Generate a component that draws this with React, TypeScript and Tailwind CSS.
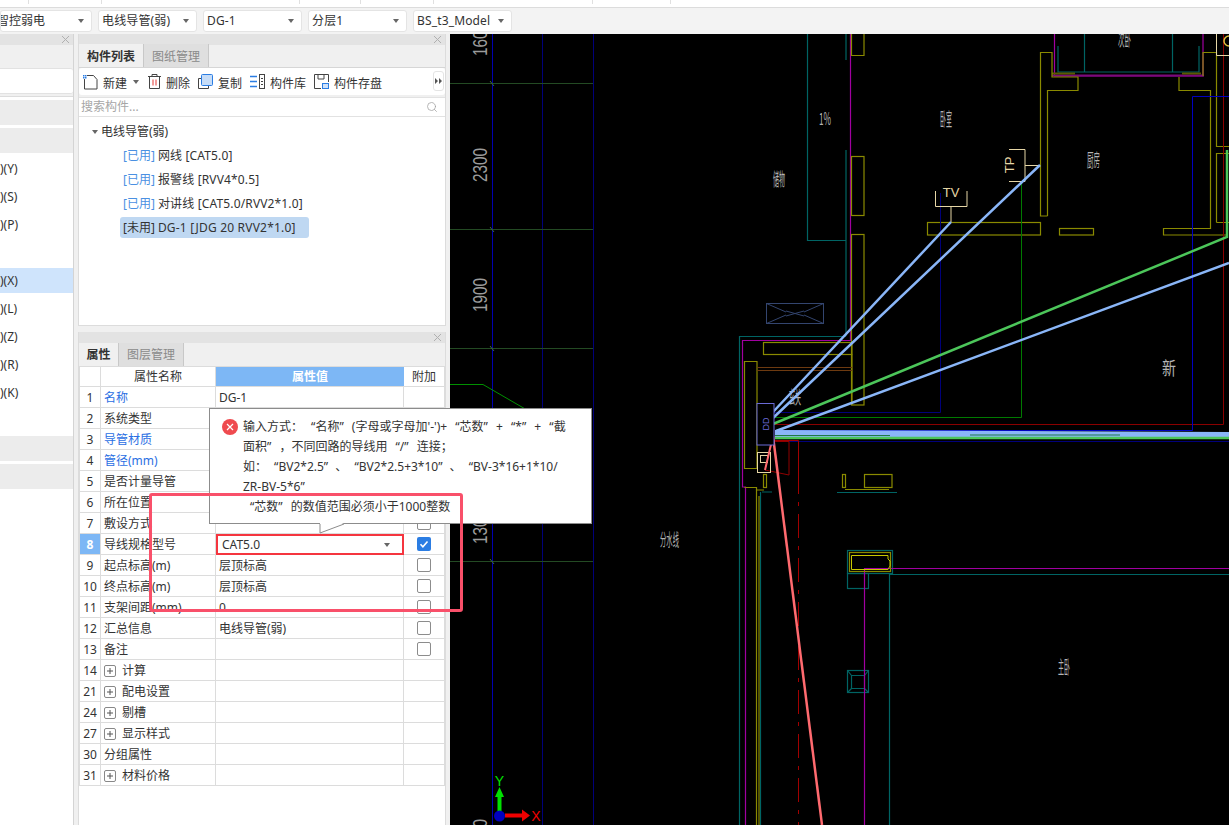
import { Search } from "lucide-react";

const SELECTS = [
  { label: "智控弱电", width: "w-[92px]", cut: true },
  { label: "电线导管(弱)", width: "w-[99px]" },
  { label: "DG-1", width: "w-[99px]" },
  { label: "分层1", width: "w-[99px]" },
  { label: "BS_t3_Model", width: "w-[99px]" },
];

const LEFT_ROWS = [
  { text: "", band: true },
  { text: "", band: true },
  { text: ")(Y)" },
  { text: ")(S)" },
  { text: ")(P)" },
  { text: "" },
  { text: ")(X)", active: true },
  { text: ")(L)" },
  { text: ")(Z)" },
  { text: ")(R)" },
  { text: ")(K)" },
  { text: "" },
  { text: "", band: true },
  { text: "", band: true },
];

const TREE = [
  { tag: "[已用]", text: "网线 [CAT5.0]" },
  { tag: "[已用]", text: "报警线 [RVV4*0.5]" },
  { tag: "[已用]", text: "对讲线 [CAT5.0/RVV2*1.0]" },
];

type Row = {
  no: number;
  name: string;
  value?: string;
  blue?: boolean;
  check?: boolean;
  plus?: boolean;
};

const ROWS: Row[] = [
  { no: 1, name: "名称", value: "DG-1", blue: true },
  { no: 2, name: "系统类型", check: true },
  { no: 3, name: "导管材质", blue: true },
  { no: 4, name: "管径(mm)", blue: true },
  { no: 5, name: "是否计量导管", check: true },
  { no: 6, name: "所在位置", check: true },
  { no: 7, name: "敷设方式", check: true },
  { no: 8, name: "导线规格型号", check: true },
  { no: 9, name: "起点标高(m)", value: "层顶标高", check: true },
  { no: 10, name: "终点标高(m)", value: "层顶标高", check: true },
  { no: 11, name: "支架间距(mm)", value: "0", check: true },
  { no: 12, name: "汇总信息", value: "电线导管(弱)", check: true },
  { no: 13, name: "备注", check: true },
  { no: 14, name: "计算", plus: true },
  { no: 21, name: "配电设置", plus: true },
  { no: 24, name: "剔槽", plus: true },
  { no: 27, name: "显示样式", plus: true },
  { no: 30, name: "分组属性" },
  { no: 31, name: "材料价格", plus: true },
];

const Caret = () => (
  <span className="w-0 h-0 border-x-[3px] border-x-transparent border-t-[4px] border-t-[#666]"></span>
);

const CloseMark = () => (
  <svg width="9" height="9" viewBox="0 0 9 9" className="text-[#b0b0b0]">
    <path d="M1 1l7 7M8 1l-7 7" stroke="currentColor" strokeWidth="1" />
  </svg>
);

const PanelHead = () => (
  <div className="h-[11px] bg-[#e3e3e3] flex items-center justify-end pr-[3px]">
    <CloseMark />
  </div>
);

const ToolText = ({ children }: { children: string }) => (
  <span className="text-[12px] text-[#333] leading-none">{children}</span>
);

const PropertyRow = ({ row }: { row: Row }) => {
  const selected = row.no === 8;
  return (
    <div className="flex h-[21px] border-b border-[#dcdcdc] text-[12px] text-[#333] leading-[22px]">
      <div
        className={`w-[22px] shrink-0 text-center border-x border-[#dcdcdc] ${
          selected ? "bg-[#7db7f5] text-white font-bold" : ""
        }`}
      >
        {row.no}
      </div>
      <div
        className={`w-[115px] shrink-0 pl-[3px] pt-[1px] border-r border-[#dcdcdc] flex items-center whitespace-nowrap ${
          row.blue ? "text-[#2b6fe3]" : ""
        }`}
      >
        {row.plus && (
          <span className="w-[12px] h-[12px] mr-[6px] border border-[#888] rounded-[2px] flex items-center justify-center">
            <svg width="6" height="6" viewBox="0 0 6 6">
              <path d="M3 0v6M0 3h6" stroke="#555" strokeWidth="1" />
            </svg>
          </span>
        )}
        {row.name}
      </div>
      {selected ? (
        <div className="w-[188px] shrink-0 border-2 border-[#f5353f] pl-[4px] flex items-center justify-between pr-[12px] h-[21px]">
          <span>CAT5.0</span>
          <Caret />
        </div>
      ) : (
        <div className="w-[188px] shrink-0 pl-[3px] border-r border-[#dcdcdc]">{row.value}</div>
      )}
      <div className="w-[41px] shrink-0 border-r border-[#dcdcdc] flex items-center justify-center">
        {row.check &&
          (selected ? (
            <span className="w-[14px] h-[14px] rounded-[2px] bg-[#2b7de3] flex items-center justify-center">
              <svg width="10" height="10" viewBox="0 0 10 10">
                <path d="M1.5 5.2l2.4 2.5 4.6-5.2" stroke="#fff" strokeWidth="1.6" fill="none" />
              </svg>
            </span>
          ) : (
            <span className="w-[14px] h-[14px] rounded-[2px] border border-[#8c8c8c] bg-white"></span>
          ))}
      </div>
    </div>
  );
};

const CadLabel = ({ x, y, text, w, h = 18 }: { x: number; y: number; text: string; w: number; h?: number }) => (
  <text
    x={x}
    y={y}
    fontSize={h}
    fill="#b4b4b4"
    textLength={w}
    lengthAdjust="spacingAndGlyphs"
    fontFamily="'Noto Sans CJK SC', sans-serif"
  >
    {text}
  </text>
);

const RulerLabel = ({ cx, cy, text, len }: { cx: number; cy: number; text: string; len: number }) => (
  <text
    transform={`translate(${cx} ${cy}) rotate(-90)`}
    textAnchor="middle"
    fontSize="20"
    fill="#9c9c9c"
    textLength={len}
    lengthAdjust="spacingAndGlyphs"
    fontFamily="'Liberation Sans', sans-serif"
  >
    {text}
  </text>
);

// CAD drawing, coordinates are page pixels
const Drawing = () => (
  <svg viewBox="450 34 779 791" className="block w-[779px] h-[791px]" fill="none">
    {/* ruler side */}
    <g strokeWidth="1">
      <path d="M492.5 34V825" stroke="#0000b0" />
      <path d="M542.5 34V825M593.5 34V825" stroke="#00007a" />
      <path d="M450 83.5H593M450 229.5H593M450 348.5H593M450 561.5H593" stroke="#234a23" />
      <path d="M450 384.5H483L527 410" stroke="#009000" />
      <path d="M490 81L494 86M490 227L494 232M490 346L494 351M490 559L494 564" stroke="#3f6a3f" />
    </g>
    <RulerLabel cx={487} cy={39} text="1600" len={34} />
    <RulerLabel cx={487} cy={165} text="2300" len={34} />
    <RulerLabel cx={487} cy={295} text="1900" len={34} />
    <RulerLabel cx={487} cy={527} text="1300" len={34} />
    <RulerLabel cx={487} cy={836} text="0000" len={34} />
    <CadLabel x={660} y={546} text="分水线" w={19} h={17} />

    {/* teal */}
    <g stroke="#006464" strokeWidth="1.2">
      <path d="M807.5 34V240.5H846M846 34V60M846 150V336M739.5 336.5H846M739.5 336V825" />
      <path d="M1058 46V72H1199V46M1084.5 34V72M1172.5 34V72" />
      <path d="M760.5 492V825M762 492H772M837 492.5H897" />
      <path d="M889.5 574V825M889 574.5H1229" />
      <rect x="847.5" y="550.5" width="45" height="23" />
      <rect x="847.5" y="573.5" width="21" height="15" />
      <rect x="847.5" y="670.5" width="21" height="22" />
      <path d="M851.5 675.5H864.5V688.5H851.5ZM847.5 670.5L851.5 675.5M868.5 670.5L864.5 675.5M847.5 692.5L851.5 688.5M868.5 692.5L864.5 688.5" />
    </g>

    {/* magenta */}
    <g stroke="#a000a0" strokeWidth="1.2">
      <path d="M850.5 34V340.5H742.5V487H745.5V825" />
      <path d="M1054.5 34V76H1203V34" />
      <path d="M864.5 825V568.5H1229" />
    </g>
    <path d="M1052 75.5H1204" stroke="#7a0a7a" strokeWidth="2" />
    <path d="M1052 73.5H1075M1182 73.5H1201" stroke="#5a5a00" strokeWidth="2" />

    {/* olive walls */}
    <g stroke="#8a8a00" strokeWidth="1.2">
      <path d="M851.5 34V55.5H864V34" />
      <rect x="851.5" y="156.5" width="12.5" height="59" />
      <rect x="851.5" y="234.5" width="12.5" height="170.5" />
      <rect x="927.5" y="222.5" width="113" height="12.5" />
      <rect x="1059.5" y="228.5" width="34" height="6.5" />
      <path d="M1047.5 216V90.5H1078V77H1052V52.5H1040.5V216H1047.5" />
      <path d="M1203 76V52.5H1216.5V146.5H1229M1216.5 222.5V153.5H1229M1216.5 222.5H1229" />
      <path d="M1179 77V90.5H1210.5V228.5H1163.5V235H1227" />
      <rect x="763.5" y="342.5" width="88.5" height="12" />
      <path d="M852 354.5V405" />
      <path d="M757 468.5H744.5V361.5H757V468" />
      <rect x="763.5" y="474.5" width="3" height="13" />
      <rect x="842.5" y="474.5" width="3" height="13" />
      <rect x="864.5" y="474.5" width="27.5" height="13" />
      <path d="M845 489.5H889M744.5 487.5H756.5V825M756.5 490H764M759 825V496" />
      <rect x="849.5" y="552.5" width="41" height="19" />
    </g>
    <path d="M851.5 555.5H888V559L890 561V566L888 569.5H851.5Z" stroke="#c8c800" strokeWidth="1" />

    {/* brown beam, x box */}
    <path d="M757 367.5H852M757 370.5H852" stroke="#6d3a10" strokeWidth="1" />
    <g stroke="#33456f" strokeWidth="1">
      <rect x="766.5" y="303.5" width="57" height="20" />
      <path d="M766.5 303.5L786 312M804 315L823.5 323.5M823.5 303.5L804 312M786 315L766.5 323.5M786 311L804 316M804 311L786 316" />
    </g>

    {/* service rects */}
    <path d="M1223.5 34V424.5H775" stroke="#8a0000" strokeWidth="1" />
    <path d="M1229 96.5H1192.5V430.5H775" stroke="#0000c0" strokeWidth="1" />
    <path d="M940.5 193V412.5H774" stroke="#00007a" strokeWidth="1" />
    <path d="M1021.5 183V417.5H774" stroke="#007a00" strokeWidth="1" />
    <path d="M774 441.5H1229" stroke="#00007a" strokeWidth="1" />
    <path d="M773 440.5H798.5V470" stroke="#a00000" strokeWidth="1" />
    <path d="M798.5 470V825" stroke="#a00000" strokeWidth="1" strokeDasharray="24 8 4 8" />
    <path d="M768 441.5H789V475L765 470" stroke="#900000" strokeWidth="1" />

    {/* symbols */}
    <g stroke="#e6d6a6" strokeWidth="1">
      <path d="M935.5 191V206.5H967V191M951 206.5V222" />
      <path d="M1009 149.5H1025V181.5H1009M1025 165.5H1040" />
      <rect x="757.5" y="452.5" width="13" height="20" />
      <rect x="760.5" y="455.5" width="7" height="7" />
      <path d="M1216.5 34V55.5H1229" />
    </g>
    <path d="M1229 36A5 5 0 0 0 1229 46" stroke="#e0c040" strokeWidth="1.5" />
    <text x="951" y="197" textAnchor="middle" fontSize="13" fill="#e6d6a6" fontFamily="'Liberation Sans', sans-serif">
      TV
    </text>
    <text
      transform="translate(1014 165) rotate(-90)"
      textAnchor="middle"
      fontSize="13"
      fill="#e6d6a6"
      fontFamily="'Liberation Sans', sans-serif"
    >
      TP
    </text>

    {/* labels */}
    <CadLabel x={773} y={186} text="储物" w={12} />
    <CadLabel x={819} y={125} text="1%" w={12} h={17} />
    <CadLabel x={940} y={126} text="卧室" w={12} />
    <CadLabel x={1087} y={167} text="厨房" w={13} />
    <CadLabel x={1118} y={46} text="次卧" w={13} h={17} />
    <CadLabel x={1162} y={375} text="新" w={14} h={18} />
    <CadLabel x={789} y={404} text="玄关" w={12} />
    <CadLabel x={1058} y={674} text="主卧" w={12} />

    {/* wires */}
    <path d="M773 412L951 222M773 418L1040 165M776 431L1229 263" stroke="#8ab6f8" strokeWidth="2.5" />
    <path d="M773 424L1227 237V150" stroke="#4cc65a" strokeWidth="2.5" />
    <path d="M775 430L1229 432V437H775Z" fill="#8ab6f8" />
    <path d="M775 435.5H890M970 435H1120" stroke="#1f7a44" strokeWidth="1" />
    <path d="M775 438H1229" stroke="#4cc65a" strokeWidth="2.5" />
    <path d="M773 436L822 825" stroke="#ff6a6f" strokeWidth="2.5" />
    <path d="M773 436L765 470" stroke="#ff6a6f" strokeWidth="2" />

    {/* distribution box */}
    <rect x="757" y="403.5" width="17" height="41.5" fill="#000" stroke="#6a6ad6" strokeWidth="1" />
    <text
      transform="translate(769 424) rotate(-90)"
      textAnchor="middle"
      fontSize="9"
      fill="#6a6ad6"
      fontFamily="'Liberation Sans', sans-serif"
    >
      DD
    </text>

    {/* axis */}
    <path d="M497.5 812V797H495L499.5 787L504 797H501.5V812Z" fill="#00e000" />
    <path d="M505 813.5H522V809.5L530 815.5L522 821.5V817.5H505Z" fill="#f00000" />
    <circle cx="499.5" cy="816" r="5.5" fill="#0000c0" />
    <text x="499.5" y="786" textAnchor="middle" fontSize="14" fill="#00e000" fontFamily="'Liberation Sans', sans-serif">
      Y
    </text>
    <text x="536" y="821" textAnchor="middle" fontSize="14" fill="#f00000" fontFamily="'Liberation Sans', sans-serif">
      X
    </text>
  </svg>
);

const App = () => {
  return (
    <div
      className="relative w-[1229px] h-[825px] overflow-hidden bg-[#f0f0f0] flex flex-col"
      style={{ fontFamily: "'Noto Sans', 'Noto Sans CJK SC', sans-serif" }}
    >
      {/* menu strip */}
      <div className="h-[8px] shrink-0 bg-white border-b border-[#dcdcdc] flex">
        <div className="w-[29px] h-[4px] border-r border-[#e0e0e0]"></div>
        <div className="w-[73px] h-[4px] border-r border-[#e0e0e0]"></div>
        <div className="w-[198px] h-[4px] border-r border-[#e0e0e0]"></div>
        <div className="w-[61px] h-[4px] border-r border-[#e0e0e0]"></div>
        <div className="w-[73px] h-[4px] border-r border-[#e0e0e0]"></div>
        <div className="w-[159px] h-[4px] border-r border-[#e0e0e0]"></div>
        <div className="w-[78px] h-[4px] border-r border-[#e0e0e0]"></div>
      </div>

      {/* select bar */}
      <div className="h-[26px] shrink-0 bg-[#f3f3f3] flex items-center gap-[6px]">
        {SELECTS.map((s) => (
          <div
            key={s.label}
            className={`${s.width} h-[22px] shrink-0 bg-white border border-[#e4e4e4] rounded-[3px] flex items-center justify-between pr-[7px] text-[12px] text-[#333] ${
              s.cut ? "justify-end gap-[33px] overflow-hidden" : "pl-[3px]"
            }`}
          >
            <span className={s.cut ? "ml-[-12px] whitespace-nowrap" : "whitespace-nowrap tracking-[0.15px]"}>
              {s.label}
            </span>
            <Caret />
          </div>
        ))}
      </div>

      <div className="flex-1 flex min-h-0">
        {/* left panel */}
        <div className="w-[74px] shrink-0 flex flex-col border-r border-[#d4d4d4]">
          <PanelHead />
          <div className="h-[23px] bg-[#f0f0f0]"></div>
          <div className="h-[26px] bg-white border-y border-[#e2e2e2] rounded-r-[3px]"></div>
          <div className="h-[2px]"></div>
          <div className="flex-1 bg-white border-t border-[#dcdcdc] pt-[3px] flex flex-col gap-[3px] text-[12px] text-[#333]">
            {LEFT_ROWS.map((r, i) => (
              <div
                key={i}
                className={`h-[25px] shrink-0 leading-[25px] ${
                  r.band ? "bg-[#ececec]" : r.active ? "bg-[#cfe4fc]" : ""
                }`}
              >
                {r.text}
              </div>
            ))}
          </div>
        </div>

        {/* middle column */}
        <div className="w-[376px] shrink-0 pl-[4px] pr-[4px] flex flex-col">
          <div className="h-[292px] shrink-0 flex flex-col border-x border-[#dcdcdc] border-b">
            <PanelHead />
            <div className="h-[23px] flex items-end bg-[#f0f0f0] border-b border-[#d6d6d6]">
              <div className="w-[65px] h-[23px] pt-[2px] bg-[#f0f0f0] border-r border-[#c8c8c8] text-[12px] font-bold text-[#333] flex items-center justify-center">
                构件列表
              </div>
              <div className="w-[65px] h-[23px] pt-[2px] bg-[#dfdfdf] border-r border-[#c8c8c8] text-[12px] text-[#8a8a8a] flex items-center justify-center">
                图纸管理
              </div>
            </div>
            <div className="h-[27px] bg-white rounded-[3px] flex items-center pl-[3px] relative">
              <svg width="16" height="16" viewBox="0 0 16 16" fill="none" className="shrink-0">
                <path d="M2.5 5V15H15V5.5L11.5 1.5H5" stroke="#444" strokeWidth="1" />
                <path d="M1 1h1.5v1.5H1zM3 3h1.5v1.5H3zM3 1h1.5v1.5H3zM1 3h1.5v1.5H1z" fill="#2b7de3" />
              </svg>
              <span className="ml-[5px]">
                <ToolText>新建</ToolText>
              </span>
              <span className="ml-[6px] mr-[9px] flex">
                <Caret />
              </span>
              <svg width="13" height="15" viewBox="0 0 13 15" fill="none" className="shrink-0">
                <path d="M0 2.5H13M4 2.5V.5H9V2.5M1.5 2.5V14.5H11.5V2.5" stroke="#444" strokeWidth="1" />
                <path d="M5 5.5V11.5M8 5.5V11.5" stroke="#e53935" strokeWidth="1" />
              </svg>
              <span className="ml-[5px]">
                <ToolText>删除</ToolText>
              </span>
              <svg width="15" height="15" viewBox="0 0 15 15" fill="none" className="shrink-0 ml-[8px]">
                <path d="M3.5 4.5H.5V14.5H10.5V11.5" stroke="#444" strokeWidth="1" />
                <rect x="3.5" y=".5" width="11" height="11" rx="1" fill="#c6dcf7" stroke="#2b7de3" />
              </svg>
              <span className="ml-[5px]">
                <ToolText>复制</ToolText>
              </span>
              <svg width="15" height="15" viewBox="0 0 15 15" fill="none" className="shrink-0 ml-[8px]">
                <rect x="9.5" y=".5" width="5" height="14" stroke="#444" />
                <path d="M11 4.5h2M11 7.5h2M11 10.5h2" stroke="#444" />
                <path d="M0 2.5h7M0 7.5h7M0 12.5h7" stroke="#2b7de3" strokeWidth="1.5" />
              </svg>
              <span className="ml-[5px]">
                <ToolText>构件库</ToolText>
              </span>
              <svg width="15" height="15" viewBox="0 0 15 15" fill="none" className="shrink-0 ml-[8px]">
                <path d="M14.5 8V.5H.5V14.5H7" stroke="#444" />
                <path d="M4 .5V5H10V.5" stroke="#444" />
                <rect x="8.5" y="9.5" width="6" height="5" fill="#cfe2fa" stroke="#2b7de3" />
              </svg>
              <span className="ml-[5px]">
                <ToolText>构件存盘</ToolText>
              </span>
              <span className="absolute right-[1px] top-[3px] w-[11px] h-[20px] bg-white border border-[#e4e4e4] rounded-[3px] flex items-center justify-center">
                <svg width="7" height="6" viewBox="0 0 7 6">
                  <path d="M0 0l3 3-3 3zM4 0l3 3-3 3z" fill="#555" />
                </svg>
              </span>
            </div>
            <div className="h-[2px] bg-[#f0f0f0]"></div>
            <div className="h-[20px] bg-white border-y border-[#e2e2e2] flex items-center justify-between pl-[2px] pr-[7px] text-[12px] text-[#a6a6a6]">
              <span>搜索构件...</span>
              <Search size={12} strokeWidth={1.5} className="text-[#a0a0a0]" />
            </div>
            <div className="flex-1 bg-white text-[12px] text-[#333] pl-[14px]">
              <div className="flex items-center h-[24px] mt-[3px] gap-[3px] -ml-px">
                <Caret />
                <span>电线导管(弱)</span>
              </div>
              <div className="pl-[27px] flex flex-col">
                {TREE.map((t) => (
                  <div key={t.text} className="h-[24px] flex items-center gap-[3px] pl-[3px] whitespace-nowrap">
                    <span className="text-[#4a90e2]">{t.tag}</span>
                    <span className="tracking-[0.15px]">{t.text}</span>
                  </div>
                ))}
                <div className="h-[21px] mt-[1px] w-[189px] bg-[#bfd8f2] rounded-[3px] flex items-center gap-[3px] pl-[3px] whitespace-nowrap">
                  <span>[未用]</span>
                  <span className="tracking-[0.2px]">DG-1 [JDG 20 RVV2*1.0]</span>
                </div>
              </div>
            </div>
          </div>

          <div className="h-[6px] shrink-0"></div>

          <div className="flex-1 flex flex-col min-h-0 border-x border-[#dcdcdc] bg-white">
            <PanelHead />
            <div className="h-[23px] shrink-0 flex bg-[#f0f0f0]">
              <div className="w-[40px] h-[23px] bg-[#f0f0f0] border-r border-[#c8c8c8] text-[12px] font-bold text-[#333] flex items-center justify-center">
                属性
              </div>
              <div className="w-[65px] h-[23px] bg-[#dfdfdf] border-r border-[#c8c8c8] text-[12px] text-[#8a8a8a] flex items-center justify-center">
                图层管理
              </div>
              <div className="flex-1"></div>
            </div>
            <div className="flex h-[21px] shrink-0 border-y border-[#dcdcdc] text-[12px] text-[#333] leading-[19px]">
              <div className="w-[22px] shrink-0 border-x border-[#dcdcdc]"></div>
              <div className="w-[115px] shrink-0 text-center border-r border-[#dcdcdc]">属性名称</div>
              <div className="w-[188px] shrink-0 text-center bg-[#7db7f5] text-white font-bold">属性值</div>
              <div className="w-[41px] shrink-0 text-center border-r border-[#dcdcdc]">附加</div>
            </div>
            {ROWS.map((row) => (
              <PropertyRow key={row.no} row={row} />
            ))}
          </div>
        </div>

        {/* drawing */}
        <div className="w-[779px] shrink-0 bg-black">
          <Drawing />
        </div>
      </div>

      {/* validation tooltip */}
      <div className="absolute left-[209px] top-[408px] w-[383px] h-[116px] bg-white border border-[#8c8c8c] text-[12px] leading-[20px] text-[#333] pl-[33px] pt-[8px] whitespace-pre">
        <span className="absolute left-[12px] top-[10px] w-[16px] h-[16px] rounded-full bg-[#ef4a4f] flex items-center justify-center">
          <svg width="8" height="8" viewBox="0 0 8 8">
            <path d="M1 1l6 6M7 1l-6 6" stroke="#fff" strokeWidth="1.2" />
          </svg>
        </span>
        <div className="[word-spacing:5px]">{"输入方式： “名称” (字母或字母加'-')+ “芯数” + “*” + “截"}</div>
        <div className="[word-spacing:5px]">{"面积” ，不同回路的导线用 “/” 连接；"}</div>
        <div className="[word-spacing:4px]">{"如： “BV2*2.5” 、 “BV2*2.5+3*10” 、 “BV-3*16+1*10/"}</div>
        <div>{"ZR-BV-5*6”"}</div>
        <div className="pl-[7px] [word-spacing:5px]">{"“芯数” 的数值范围必须小于1000整数"}</div>
      </div>
      <svg className="absolute left-[319px] top-[523px]" width="26" height="11" viewBox="0 0 26 11" fill="none">
        <path d="M1 0V10L25 0Z" fill="#fff" />
        <path d="M1 1V10L25 1" stroke="#8c8c8c" strokeWidth="1" />
      </svg>

      {/* red annotation box */}
      <div className="absolute left-[149px] top-[493px] w-[314px] h-[119px] border-[3px] border-[#f9506a] rounded-[3px]"></div>
    </div>
  );
};

export default App;
